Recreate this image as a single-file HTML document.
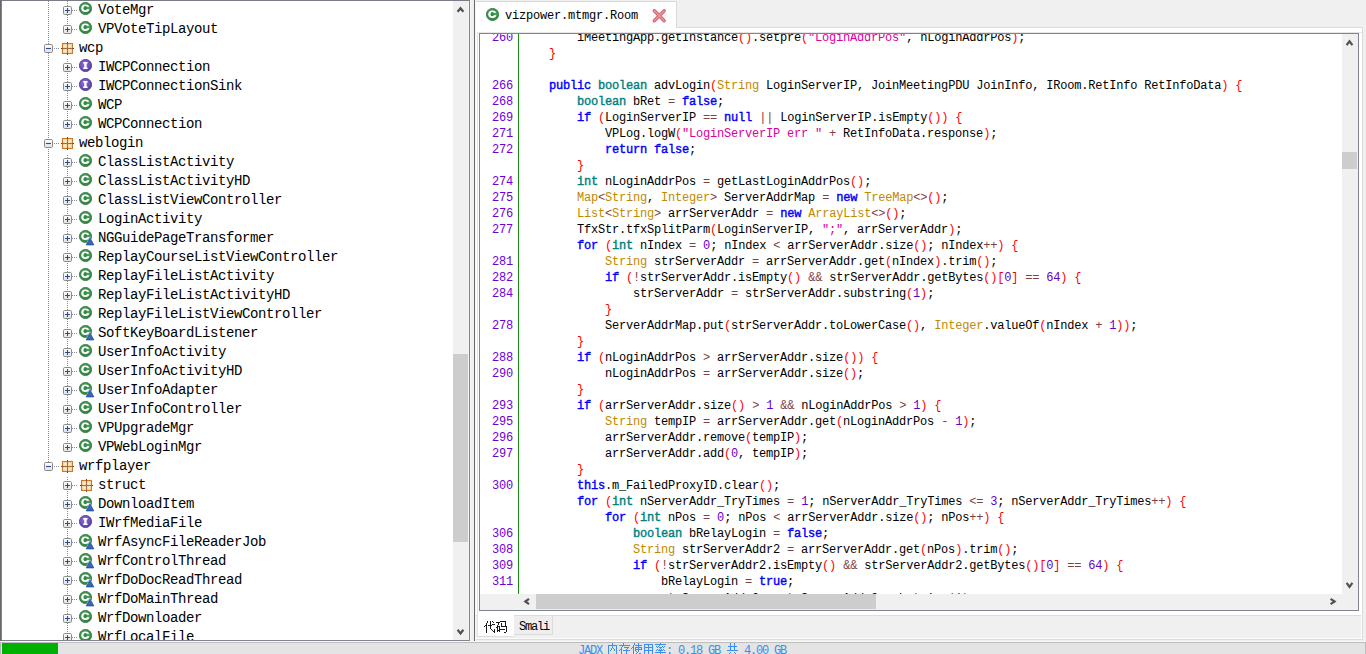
<!DOCTYPE html>
<html><head><meta charset="utf-8">
<style>
*{margin:0;padding:0;box-sizing:border-box}
html,body{width:1366px;height:654px;overflow:hidden;background:#f0f0f0;position:relative;font-family:"Liberation Sans",sans-serif}
.a{position:absolute}
/* tree */
#tree{position:absolute;left:0;top:0;width:470px;height:641px;background:#fff;border-top:1px solid #7a7d85;border-left:2px solid #7f848e;border-right:1px solid #7f848e;border-bottom:1px solid #7f848e;overflow:hidden}
#tv{position:absolute;left:-2px;top:-1px;width:453px;height:640px;overflow:hidden}
.dv{position:absolute;width:1px;background:repeating-linear-gradient(to bottom,#8a8a8a 0 1px,transparent 1px 2px)}
.dh{position:absolute;height:1px;background:repeating-linear-gradient(to right,#8a8a8a 0 1px,transparent 1px 2px)}
.ex{position:absolute;width:9px;height:9px;background:#fff}
.ex svg{display:block}
.ico{position:absolute;display:block;overflow:visible}
.tt{position:absolute;height:19px;line-height:19px;font-family:"Liberation Mono",monospace;font-size:14px;letter-spacing:-0.4px;color:#000;white-space:pre}
/* scrollbars */
.trk{position:absolute;background:#f0f0f0}
.thm{position:absolute;background:#cdcdcd}
.st{top:644px;height:14px;line-height:14px;font-family:"Liberation Mono",monospace;font-size:12px;letter-spacing:-1.2px;color:#3a8ef0;white-space:pre}
.stc{top:643px;height:14px;line-height:14px;font-size:12px;color:#3a8ef0;white-space:pre}
/* right */
.ln{position:absolute;left:480px;width:33px;height:16px;line-height:16px;text-align:right;font-family:"Liberation Mono",monospace;font-size:12px;letter-spacing:-0.2px;color:#6e00d6;white-space:pre}
.cl{position:absolute;height:16px;line-height:16px;font-family:"Liberation Mono",monospace;font-size:12px;letter-spacing:-0.2px;color:#000;white-space:pre}
.cl i,.cl b{font-style:normal}
.cl b{font-weight:normal;-webkit-text-stroke:0.4px currentColor}
.k{color:#0000ff}
.d{color:#008080}
.c{color:#c08a00}
.s{color:#dc009c}
.n{color:#6400c8}
.p{color:#ff0000}
.o{color:#804040}
</style></head><body>
<svg width="0" height="0" style="position:absolute">
<defs>
<linearGradient id="gex" x1="0" y1="0" x2="0" y2="1"><stop offset="0" stop-color="#ffffff"/><stop offset="1" stop-color="#e2e2e2"/></linearGradient>
<radialGradient id="gcl" cx="0.45" cy="0.4" r="0.65"><stop offset="0" stop-color="#5aa866"/><stop offset="1" stop-color="#2c7e3e"/></radialGradient>
<radialGradient id="gpk" cx="0.5" cy="0.5" r="0.7"><stop offset="0" stop-color="#fff6cc"/><stop offset="1" stop-color="#e8c290"/></radialGradient>
<radialGradient id="gif" cx="0.4" cy="0.35" r="0.7"><stop offset="0" stop-color="#8a70d0"/><stop offset="1" stop-color="#5a3ea0"/></radialGradient>
<symbol id="exp" viewBox="0 0 9 9"><rect x="0.5" y="0.5" width="8" height="8" rx="1.2" fill="url(#gex)" stroke="#8a8a8a"/><path d="M2 4.5H7M4.5 2V7" stroke="#2a4c9e" stroke-width="1.1"/></symbol>
<symbol id="exm" viewBox="0 0 9 9"><rect x="0.5" y="0.5" width="8" height="8" rx="1.2" fill="url(#gex)" stroke="#8a8a8a"/><path d="M2 4.5H7" stroke="#2a4c9e" stroke-width="1.1"/></symbol>
<symbol id="icl" viewBox="0 0 13 13"><circle cx="6.5" cy="6.5" r="6.1" fill="url(#gcl)" stroke="#2e7c3e" stroke-width="0.9"/><ellipse cx="6.4" cy="6.3" rx="4.1" ry="3.8" fill="#fff"/><rect x="6.4" y="4.8" width="5" height="2.4" fill="#4c9c5c"/><ellipse cx="6.2" cy="6.2" rx="1.7" ry="2.1" fill="#358848"/></symbol>
<symbol id="iif" viewBox="0 0 13 13"><circle cx="6.5" cy="6.5" r="6.1" fill="url(#gif)" stroke="#503494" stroke-width="0.9"/><path d="M4.2 3H8.6V4.5H7.6V8.6H8.6V10H4.2V8.6H5.2V4.5H4.2Z" fill="#fff"/></symbol>
<symbol id="ipk" viewBox="0 0 13 13"><rect x="1.5" y="1.5" width="10" height="10" fill="#e9c48e" stroke="#c97a2a" stroke-width="1.1"/><rect x="2" y="2" width="4.5" height="4.5" fill="url(#gpk)"/><rect x="6.5" y="2" width="4.5" height="4.5" fill="url(#gpk)"/><rect x="2" y="6.5" width="4.5" height="4.5" fill="url(#gpk)"/><rect x="6.5" y="6.5" width="4.5" height="4.5" fill="url(#gpk)"/><path d="M6.5 1V12M1 6.5H12" stroke="#a86a48" stroke-width="1"/><path d="M6.5 0V1.5M6.5 11.5V13M0 6.5H1.5M11.5 6.5H13" stroke="#6e4220" stroke-width="1"/></symbol>
<symbol id="iwr" viewBox="0 0 10 9"><path d="M5 -0.4L9.9 8.5H0.1Z" fill="#fff"/><path d="M5 0.9L8.8 7.9H1.2Z" fill="#3566b8" stroke="#1d4c9c" stroke-width="0.8"/></symbol>
</defs></svg>

<!-- ============ LEFT TREE ============ -->
<div id="tree">
 <div id="tv">
<div class="dv" style="left:48px;top:1px;height:461px"></div>
<div class="dv" style="left:67px;top:1px;height:24px"></div>
<div class="dv" style="left:67px;top:59px;height:61px"></div>
<div class="dv" style="left:67px;top:155px;height:288px"></div>
<div class="dv" style="left:67px;top:477px;height:163px"></div>
<div class="dh" style="left:72px;top:10px;width:6px"></div>
<svg class="ico" style="left:63px;top:6px" width="9" height="9"><use href="#exp"/></svg>
<svg class="ico" style="left:79px;top:2px" width="13" height="13"><use href="#icl"/></svg>
<div class="tt" style="left:98px;top:1px">VoteMgr</div>
<div class="dh" style="left:72px;top:29px;width:6px"></div>
<svg class="ico" style="left:63px;top:25px" width="9" height="9"><use href="#exp"/></svg>
<svg class="ico" style="left:79px;top:21px" width="13" height="13"><use href="#icl"/></svg>
<div class="tt" style="left:98px;top:20px">VPVoteTipLayout</div>
<div class="dh" style="left:54px;top:48px;width:5px"></div>
<svg class="ico" style="left:44px;top:44px" width="9" height="9"><use href="#exm"/></svg>
<svg class="ico" style="left:61px;top:42px" width="13" height="13"><use href="#ipk"/></svg>
<div class="tt" style="left:79px;top:39px">wcp</div>
<div class="dh" style="left:72px;top:67px;width:6px"></div>
<svg class="ico" style="left:63px;top:63px" width="9" height="9"><use href="#exp"/></svg>
<svg class="ico" style="left:79px;top:59px" width="13" height="13"><use href="#iif"/></svg>
<div class="tt" style="left:98px;top:58px">IWCPConnection</div>
<div class="dh" style="left:72px;top:86px;width:6px"></div>
<svg class="ico" style="left:63px;top:82px" width="9" height="9"><use href="#exp"/></svg>
<svg class="ico" style="left:79px;top:78px" width="13" height="13"><use href="#iif"/></svg>
<div class="tt" style="left:98px;top:77px">IWCPConnectionSink</div>
<div class="dh" style="left:72px;top:105px;width:6px"></div>
<svg class="ico" style="left:63px;top:101px" width="9" height="9"><use href="#exp"/></svg>
<svg class="ico" style="left:79px;top:97px" width="13" height="13"><use href="#icl"/></svg>
<div class="tt" style="left:98px;top:96px">WCP</div>
<div class="dh" style="left:72px;top:124px;width:6px"></div>
<svg class="ico" style="left:63px;top:120px" width="9" height="9"><use href="#exp"/></svg>
<svg class="ico" style="left:79px;top:116px" width="13" height="13"><use href="#icl"/></svg>
<div class="tt" style="left:98px;top:115px">WCPConnection</div>
<div class="dh" style="left:54px;top:143px;width:5px"></div>
<svg class="ico" style="left:44px;top:139px" width="9" height="9"><use href="#exm"/></svg>
<svg class="ico" style="left:61px;top:137px" width="13" height="13"><use href="#ipk"/></svg>
<div class="tt" style="left:79px;top:134px">weblogin</div>
<div class="dh" style="left:72px;top:162px;width:6px"></div>
<svg class="ico" style="left:63px;top:158px" width="9" height="9"><use href="#exp"/></svg>
<svg class="ico" style="left:79px;top:154px" width="13" height="13"><use href="#icl"/></svg>
<div class="tt" style="left:98px;top:153px">ClassListActivity</div>
<div class="dh" style="left:72px;top:181px;width:6px"></div>
<svg class="ico" style="left:63px;top:177px" width="9" height="9"><use href="#exp"/></svg>
<svg class="ico" style="left:79px;top:173px" width="13" height="13"><use href="#icl"/></svg>
<div class="tt" style="left:98px;top:172px">ClassListActivityHD</div>
<div class="dh" style="left:72px;top:200px;width:6px"></div>
<svg class="ico" style="left:63px;top:196px" width="9" height="9"><use href="#exp"/></svg>
<svg class="ico" style="left:79px;top:192px" width="13" height="13"><use href="#icl"/></svg>
<div class="tt" style="left:98px;top:191px">ClassListViewController</div>
<div class="dh" style="left:72px;top:219px;width:6px"></div>
<svg class="ico" style="left:63px;top:215px" width="9" height="9"><use href="#exp"/></svg>
<svg class="ico" style="left:79px;top:211px" width="13" height="13"><use href="#icl"/></svg>
<div class="tt" style="left:98px;top:210px">LoginActivity</div>
<div class="dh" style="left:72px;top:238px;width:6px"></div>
<svg class="ico" style="left:63px;top:234px" width="9" height="9"><use href="#exp"/></svg>
<svg class="ico" style="left:79px;top:230px" width="13" height="13"><use href="#icl"/></svg>
<svg class="ico" style="left:85px;top:237px" width="10" height="9"><use href="#iwr"/></svg>
<div class="tt" style="left:98px;top:229px">NGGuidePageTransformer</div>
<div class="dh" style="left:72px;top:257px;width:6px"></div>
<svg class="ico" style="left:63px;top:253px" width="9" height="9"><use href="#exp"/></svg>
<svg class="ico" style="left:79px;top:249px" width="13" height="13"><use href="#icl"/></svg>
<div class="tt" style="left:98px;top:248px">ReplayCourseListViewController</div>
<div class="dh" style="left:72px;top:276px;width:6px"></div>
<svg class="ico" style="left:63px;top:272px" width="9" height="9"><use href="#exp"/></svg>
<svg class="ico" style="left:79px;top:268px" width="13" height="13"><use href="#icl"/></svg>
<div class="tt" style="left:98px;top:267px">ReplayFileListActivity</div>
<div class="dh" style="left:72px;top:295px;width:6px"></div>
<svg class="ico" style="left:63px;top:291px" width="9" height="9"><use href="#exp"/></svg>
<svg class="ico" style="left:79px;top:287px" width="13" height="13"><use href="#icl"/></svg>
<div class="tt" style="left:98px;top:286px">ReplayFileListActivityHD</div>
<div class="dh" style="left:72px;top:314px;width:6px"></div>
<svg class="ico" style="left:63px;top:310px" width="9" height="9"><use href="#exp"/></svg>
<svg class="ico" style="left:79px;top:306px" width="13" height="13"><use href="#icl"/></svg>
<div class="tt" style="left:98px;top:305px">ReplayFileListViewController</div>
<div class="dh" style="left:72px;top:333px;width:6px"></div>
<svg class="ico" style="left:63px;top:329px" width="9" height="9"><use href="#exp"/></svg>
<svg class="ico" style="left:79px;top:325px" width="13" height="13"><use href="#icl"/></svg>
<svg class="ico" style="left:85px;top:332px" width="10" height="9"><use href="#iwr"/></svg>
<div class="tt" style="left:98px;top:324px">SoftKeyBoardListener</div>
<div class="dh" style="left:72px;top:352px;width:6px"></div>
<svg class="ico" style="left:63px;top:348px" width="9" height="9"><use href="#exp"/></svg>
<svg class="ico" style="left:79px;top:344px" width="13" height="13"><use href="#icl"/></svg>
<div class="tt" style="left:98px;top:343px">UserInfoActivity</div>
<div class="dh" style="left:72px;top:371px;width:6px"></div>
<svg class="ico" style="left:63px;top:367px" width="9" height="9"><use href="#exp"/></svg>
<svg class="ico" style="left:79px;top:363px" width="13" height="13"><use href="#icl"/></svg>
<div class="tt" style="left:98px;top:362px">UserInfoActivityHD</div>
<div class="dh" style="left:72px;top:390px;width:6px"></div>
<svg class="ico" style="left:63px;top:386px" width="9" height="9"><use href="#exp"/></svg>
<svg class="ico" style="left:79px;top:382px" width="13" height="13"><use href="#icl"/></svg>
<svg class="ico" style="left:85px;top:389px" width="10" height="9"><use href="#iwr"/></svg>
<div class="tt" style="left:98px;top:381px">UserInfoAdapter</div>
<div class="dh" style="left:72px;top:409px;width:6px"></div>
<svg class="ico" style="left:63px;top:405px" width="9" height="9"><use href="#exp"/></svg>
<svg class="ico" style="left:79px;top:401px" width="13" height="13"><use href="#icl"/></svg>
<div class="tt" style="left:98px;top:400px">UserInfoController</div>
<div class="dh" style="left:72px;top:428px;width:6px"></div>
<svg class="ico" style="left:63px;top:424px" width="9" height="9"><use href="#exp"/></svg>
<svg class="ico" style="left:79px;top:420px" width="13" height="13"><use href="#icl"/></svg>
<div class="tt" style="left:98px;top:419px">VPUpgradeMgr</div>
<div class="dh" style="left:72px;top:447px;width:6px"></div>
<svg class="ico" style="left:63px;top:443px" width="9" height="9"><use href="#exp"/></svg>
<svg class="ico" style="left:79px;top:439px" width="13" height="13"><use href="#icl"/></svg>
<div class="tt" style="left:98px;top:438px">VPWebLoginMgr</div>
<div class="dh" style="left:54px;top:466px;width:5px"></div>
<svg class="ico" style="left:44px;top:462px" width="9" height="9"><use href="#exm"/></svg>
<svg class="ico" style="left:61px;top:460px" width="13" height="13"><use href="#ipk"/></svg>
<div class="tt" style="left:79px;top:457px">wrfplayer</div>
<div class="dh" style="left:72px;top:485px;width:6px"></div>
<svg class="ico" style="left:63px;top:481px" width="9" height="9"><use href="#exp"/></svg>
<svg class="ico" style="left:80px;top:479px" width="13" height="13"><use href="#ipk"/></svg>
<div class="tt" style="left:98px;top:476px">struct</div>
<div class="dh" style="left:72px;top:504px;width:6px"></div>
<svg class="ico" style="left:63px;top:500px" width="9" height="9"><use href="#exp"/></svg>
<svg class="ico" style="left:79px;top:496px" width="13" height="13"><use href="#icl"/></svg>
<svg class="ico" style="left:85px;top:503px" width="10" height="9"><use href="#iwr"/></svg>
<div class="tt" style="left:98px;top:495px">DownloadItem</div>
<div class="dh" style="left:72px;top:523px;width:6px"></div>
<svg class="ico" style="left:63px;top:519px" width="9" height="9"><use href="#exp"/></svg>
<svg class="ico" style="left:79px;top:515px" width="13" height="13"><use href="#iif"/></svg>
<div class="tt" style="left:98px;top:514px">IWrfMediaFile</div>
<div class="dh" style="left:72px;top:542px;width:6px"></div>
<svg class="ico" style="left:63px;top:538px" width="9" height="9"><use href="#exp"/></svg>
<svg class="ico" style="left:79px;top:534px" width="13" height="13"><use href="#icl"/></svg>
<svg class="ico" style="left:85px;top:541px" width="10" height="9"><use href="#iwr"/></svg>
<div class="tt" style="left:98px;top:533px">WrfAsyncFileReaderJob</div>
<div class="dh" style="left:72px;top:561px;width:6px"></div>
<svg class="ico" style="left:63px;top:557px" width="9" height="9"><use href="#exp"/></svg>
<svg class="ico" style="left:79px;top:553px" width="13" height="13"><use href="#icl"/></svg>
<svg class="ico" style="left:85px;top:560px" width="10" height="9"><use href="#iwr"/></svg>
<div class="tt" style="left:98px;top:552px">WrfControlThread</div>
<div class="dh" style="left:72px;top:580px;width:6px"></div>
<svg class="ico" style="left:63px;top:576px" width="9" height="9"><use href="#exp"/></svg>
<svg class="ico" style="left:79px;top:572px" width="13" height="13"><use href="#icl"/></svg>
<svg class="ico" style="left:85px;top:579px" width="10" height="9"><use href="#iwr"/></svg>
<div class="tt" style="left:98px;top:571px">WrfDoDocReadThread</div>
<div class="dh" style="left:72px;top:599px;width:6px"></div>
<svg class="ico" style="left:63px;top:595px" width="9" height="9"><use href="#exp"/></svg>
<svg class="ico" style="left:79px;top:591px" width="13" height="13"><use href="#icl"/></svg>
<svg class="ico" style="left:85px;top:598px" width="10" height="9"><use href="#iwr"/></svg>
<div class="tt" style="left:98px;top:590px">WrfDoMainThread</div>
<div class="dh" style="left:72px;top:618px;width:6px"></div>
<svg class="ico" style="left:63px;top:614px" width="9" height="9"><use href="#exp"/></svg>
<svg class="ico" style="left:79px;top:610px" width="13" height="13"><use href="#icl"/></svg>
<div class="tt" style="left:98px;top:609px">WrfDownloader</div>
<div class="dh" style="left:72px;top:637px;width:6px"></div>
<svg class="ico" style="left:63px;top:633px" width="9" height="9"><use href="#exp"/></svg>
<svg class="ico" style="left:79px;top:629px" width="13" height="13"><use href="#icl"/></svg>
<div class="tt" style="left:98px;top:628px">WrfLocalFile</div>
 </div>
 <div class="trk" style="left:451px;top:0;width:16px;height:639px"></div>
 <div class="a" style="left:466px;top:0;width:1px;height:639px;background:#f6f6f6"></div>
 <div class="thm" style="left:451px;top:353px;width:15px;height:188px"></div>
</div>
<div class="a" style="left:0;top:0;width:1px;height:641px;background:#686868"></div>
<div class="a" style="left:470px;top:0;width:1px;height:641px;background:#f8f8f8"></div>
<div class="a" style="left:474px;top:0;width:1px;height:641px;background:#6a6a6a"></div>

<!-- ============ RIGHT TAB PANE ============ -->
<div class="a" style="left:475px;top:0;width:1px;height:640px;background:#f7f7f7"></div>
<div class="a" style="left:476px;top:27px;width:887px;height:1px;background:#dcdcdc"></div>
<!-- content area -->
<div class="a" style="left:476px;top:28px;width:886px;height:587px;background:#fff"></div>
<div class="a" style="left:1362px;top:27px;width:1px;height:589px;background:#dcdcdc"></div>
<div class="a" style="left:476px;top:615px;width:887px;height:1px;background:#dcdcdc"></div>
<!-- top tab -->
<div class="a" style="left:476px;top:1px;width:201px;height:27px;background:#fff;border-top:1px solid #d9d9d9;border-right:1px solid #d9d9d9"></div>
<svg class="ico" style="left:486px;top:8px" width="13" height="13"><use href="#icl"/></svg>
<div class="a" style="left:505px;top:8px;height:16px;line-height:16px;font-family:'Liberation Mono',monospace;font-size:12px;letter-spacing:-0.2px;color:#000;white-space:pre">vizpower.mtmgr.Room</div>
<!-- code frame -->
<div class="a" style="left:477px;top:32px;width:885px;height:1px;background:#e6e6e6"></div>
<div class="a" style="left:477px;top:32px;width:1px;height:604px;background:#e3e3e3"></div>
<div class="a" style="left:479px;top:33px;width:880px;height:578px;border:1px solid #7f848e;background:#fff"></div>
<div class="a" style="left:480px;top:34px;width:878px;height:576px;overflow:hidden">
 <div class="a" style="left:-480px;top:-34px;width:1366px;height:654px">
 <div class="a" style="left:518px;top:34px;width:1px;height:560px;background:#1a8a1a"></div>
<div class="ln" style="top:30px">260</div>
<div class="cl" style="top:30px;left:577px">iMeetingApp.getInstance<i class="p">(</i><i class="p">)</i>.setpre<i class="p">(</i><i class="s">&quot;LoginAddrPos&quot;</i>, nLoginAddrPos<i class="p">)</i>;</div>
<div class="cl" style="top:46px;left:549px"><i class="p">}</i></div>
<div class="ln" style="top:78px">266</div>
<div class="cl" style="top:78px;left:549px"><b class="k">public</b> <b class="d">boolean</b> advLogin<i class="p">(</i><i class="c">String</i> LoginServerIP, JoinMeetingPDU JoinInfo, IRoom.RetInfo RetInfoData<i class="p">)</i> <i class="p">{</i></div>
<div class="ln" style="top:94px">268</div>
<div class="cl" style="top:94px;left:577px"><b class="d">boolean</b> bRet <i class="o">=</i> <b class="k">false</b>;</div>
<div class="ln" style="top:110px">269</div>
<div class="cl" style="top:110px;left:577px"><b class="k">if</b> <i class="p">(</i>LoginServerIP <i class="o">==</i> <b class="k">null</b> <i class="o">||</i> LoginServerIP.isEmpty<i class="p">(</i><i class="p">)</i><i class="p">)</i> <i class="p">{</i></div>
<div class="ln" style="top:126px">271</div>
<div class="cl" style="top:126px;left:605px">VPLog.logW<i class="p">(</i><i class="s">&quot;LoginServerIP err &quot;</i> <i class="o">+</i> RetInfoData.response<i class="p">)</i>;</div>
<div class="ln" style="top:142px">272</div>
<div class="cl" style="top:142px;left:605px"><b class="k">return</b> <b class="k">false</b>;</div>
<div class="cl" style="top:158px;left:577px"><i class="p">}</i></div>
<div class="ln" style="top:174px">274</div>
<div class="cl" style="top:174px;left:577px"><b class="d">int</b> nLoginAddrPos <i class="o">=</i> getLastLoginAddrPos<i class="p">(</i><i class="p">)</i>;</div>
<div class="ln" style="top:190px">275</div>
<div class="cl" style="top:190px;left:577px"><i class="c">Map</i><i class="o">&lt;</i><i class="c">String</i>, <i class="c">Integer</i><i class="o">&gt;</i> ServerAddrMap <i class="o">=</i> <b class="k">new</b> <i class="c">TreeMap</i><i class="o">&lt;</i><i class="o">&gt;</i><i class="p">(</i><i class="p">)</i>;</div>
<div class="ln" style="top:206px">276</div>
<div class="cl" style="top:206px;left:577px"><i class="c">List</i><i class="o">&lt;</i><i class="c">String</i><i class="o">&gt;</i> arrServerAddr <i class="o">=</i> <b class="k">new</b> <i class="c">ArrayList</i><i class="o">&lt;</i><i class="o">&gt;</i><i class="p">(</i><i class="p">)</i>;</div>
<div class="ln" style="top:222px">277</div>
<div class="cl" style="top:222px;left:577px">TfxStr.tfxSplitParm<i class="p">(</i>LoginServerIP, <i class="s">&quot;;&quot;</i>, arrServerAddr<i class="p">)</i>;</div>
<div class="cl" style="top:238px;left:577px"><b class="k">for</b> <i class="p">(</i><b class="d">int</b> nIndex <i class="o">=</i> <i class="n">0</i>; nIndex <i class="o">&lt;</i> arrServerAddr.size<i class="p">(</i><i class="p">)</i>; nIndex<i class="o">++</i><i class="p">)</i> <i class="p">{</i></div>
<div class="ln" style="top:254px">281</div>
<div class="cl" style="top:254px;left:605px"><i class="c">String</i> strServerAddr <i class="o">=</i> arrServerAddr.get<i class="p">(</i>nIndex<i class="p">)</i>.trim<i class="p">(</i><i class="p">)</i>;</div>
<div class="ln" style="top:270px">282</div>
<div class="cl" style="top:270px;left:605px"><b class="k">if</b> <i class="p">(</i><i class="o">!</i>strServerAddr.isEmpty<i class="p">(</i><i class="p">)</i> <i class="o">&amp;&amp;</i> strServerAddr.getBytes<i class="p">(</i><i class="p">)</i><i class="p">[</i><i class="n">0</i><i class="p">]</i> <i class="o">==</i> <i class="n">64</i><i class="p">)</i> <i class="p">{</i></div>
<div class="ln" style="top:286px">284</div>
<div class="cl" style="top:286px;left:633px">strServerAddr <i class="o">=</i> strServerAddr.substring<i class="p">(</i><i class="n">1</i><i class="p">)</i>;</div>
<div class="cl" style="top:302px;left:605px"><i class="p">}</i></div>
<div class="ln" style="top:318px">278</div>
<div class="cl" style="top:318px;left:605px">ServerAddrMap.put<i class="p">(</i>strServerAddr.toLowerCase<i class="p">(</i><i class="p">)</i>, <i class="c">Integer</i>.valueOf<i class="p">(</i>nIndex <i class="o">+</i> <i class="n">1</i><i class="p">)</i><i class="p">)</i>;</div>
<div class="cl" style="top:334px;left:577px"><i class="p">}</i></div>
<div class="ln" style="top:350px">288</div>
<div class="cl" style="top:350px;left:577px"><b class="k">if</b> <i class="p">(</i>nLoginAddrPos <i class="o">&gt;</i> arrServerAddr.size<i class="p">(</i><i class="p">)</i><i class="p">)</i> <i class="p">{</i></div>
<div class="ln" style="top:366px">290</div>
<div class="cl" style="top:366px;left:605px">nLoginAddrPos <i class="o">=</i> arrServerAddr.size<i class="p">(</i><i class="p">)</i>;</div>
<div class="cl" style="top:382px;left:577px"><i class="p">}</i></div>
<div class="ln" style="top:398px">293</div>
<div class="cl" style="top:398px;left:577px"><b class="k">if</b> <i class="p">(</i>arrServerAddr.size<i class="p">(</i><i class="p">)</i> <i class="o">&gt;</i> <i class="n">1</i> <i class="o">&amp;&amp;</i> nLoginAddrPos <i class="o">&gt;</i> <i class="n">1</i><i class="p">)</i> <i class="p">{</i></div>
<div class="ln" style="top:414px">295</div>
<div class="cl" style="top:414px;left:605px"><i class="c">String</i> tempIP <i class="o">=</i> arrServerAddr.get<i class="p">(</i>nLoginAddrPos <i class="o">-</i> <i class="n">1</i><i class="p">)</i>;</div>
<div class="ln" style="top:430px">296</div>
<div class="cl" style="top:430px;left:605px">arrServerAddr.remove<i class="p">(</i>tempIP<i class="p">)</i>;</div>
<div class="ln" style="top:446px">297</div>
<div class="cl" style="top:446px;left:605px">arrServerAddr.add<i class="p">(</i><i class="n">0</i>, tempIP<i class="p">)</i>;</div>
<div class="cl" style="top:462px;left:577px"><i class="p">}</i></div>
<div class="ln" style="top:478px">300</div>
<div class="cl" style="top:478px;left:577px"><b class="k">this</b>.m_FailedProxyID.clear<i class="p">(</i><i class="p">)</i>;</div>
<div class="cl" style="top:494px;left:577px"><b class="k">for</b> <i class="p">(</i><b class="d">int</b> nServerAddr_TryTimes <i class="o">=</i> <i class="n">1</i>; nServerAddr_TryTimes <i class="o">&lt;=</i> <i class="n">3</i>; nServerAddr_TryTimes<i class="o">++</i><i class="p">)</i> <i class="p">{</i></div>
<div class="cl" style="top:510px;left:605px"><b class="k">for</b> <i class="p">(</i><b class="d">int</b> nPos <i class="o">=</i> <i class="n">0</i>; nPos <i class="o">&lt;</i> arrServerAddr.size<i class="p">(</i><i class="p">)</i>; nPos<i class="o">++</i><i class="p">)</i> <i class="p">{</i></div>
<div class="ln" style="top:526px">306</div>
<div class="cl" style="top:526px;left:633px"><b class="d">boolean</b> bRelayLogin <i class="o">=</i> <b class="k">false</b>;</div>
<div class="ln" style="top:542px">308</div>
<div class="cl" style="top:542px;left:633px"><i class="c">String</i> strServerAddr2 <i class="o">=</i> arrServerAddr.get<i class="p">(</i>nPos<i class="p">)</i>.trim<i class="p">(</i><i class="p">)</i>;</div>
<div class="ln" style="top:558px">309</div>
<div class="cl" style="top:558px;left:633px"><b class="k">if</b> <i class="p">(</i><i class="o">!</i>strServerAddr2.isEmpty<i class="p">(</i><i class="p">)</i> <i class="o">&amp;&amp;</i> strServerAddr2.getBytes<i class="p">(</i><i class="p">)</i><i class="p">[</i><i class="n">0</i><i class="p">]</i> <i class="o">==</i> <i class="n">64</i><i class="p">)</i> <i class="p">{</i></div>
<div class="ln" style="top:574px">311</div>
<div class="cl" style="top:574px;left:661px">bRelayLogin <i class="o">=</i> <b class="k">true</b>;</div>
<div class="cl" style="top:591px;left:661px">strServerAddr2 <i class="o">=</i> strServerAddr2.substring<i class="p">(</i><i class="n">1</i><i class="p">)</i>;</div>
 </div>
</div>
<!-- v scroll -->
<div class="trk" style="left:1342px;top:34px;width:16px;height:576px"></div>
<div class="thm" style="left:1342px;top:152px;width:15px;height:17px"></div>
<!-- h scroll -->
<div class="trk" style="left:480px;top:594px;width:878px;height:16px"></div>
<div class="thm" style="left:536px;top:594px;width:340px;height:15px"></div>

<!-- bottom tabs -->
<div class="a" style="left:477px;top:611px;width:37px;height:26px;background:#fff;border-left:1px solid #e3e3e3;border-bottom:1px solid #e0e0e0"></div>
<div class="a" style="left:514px;top:615px;width:39px;height:20px;background:#eeeeee;border:1px solid #dcdcdc;border-left:none"></div>
<div class="a" style="left:519px;top:619px;height:16px;line-height:16px;font-family:'Liberation Mono',monospace;font-size:12px;letter-spacing:-1.2px;color:#000;white-space:pre">Smali</div>
<div class="a" style="left:475px;top:638px;width:887px;height:1px;background:#fdfdfd"></div>
<div class="a" style="left:476px;top:639px;width:887px;height:1px;background:#dcdcdc"></div>
<div class="a" style="left:1361px;top:615px;width:1px;height:24px;background:#fdfdfd"></div>
<div class="a" style="left:1362px;top:27px;width:1px;height:613px;background:#dcdcdc"></div>

<!-- status bar -->
<div class="a" style="left:0;top:641px;width:1366px;height:1px;background:#f8f8f8"></div>
<div class="a" style="left:0;top:642px;width:1366px;height:1px;background:#bdbdbd"></div>
<div class="a" style="left:0;top:643px;width:1366px;height:11px;background:#e4e4e4"></div>
<div class="a" style="left:0;top:643px;width:1px;height:11px;background:#b4b4b4"></div>
<div class="a" style="left:1px;top:643px;width:1px;height:11px;background:#ece4ee"></div>
<div class="a" style="left:2px;top:643px;width:56px;height:11px;background:#00b000"></div>
<div class="a" style="left:1365px;top:642px;width:1px;height:12px;background:#bdbdbd"></div>
<div class="a st" style="left:578px">JADX </div>
<div class="a st" style="left:666px">: 0.18 GB </div>
<div class="a st" style="left:738px"> 4.00 GB</div>

<svg class="a" style="left:0;top:0;pointer-events:none" width="1366" height="654">
 <g fill="none" stroke="#505050" stroke-width="2.2">
  <path d="M457.6 11.8L460.5 8.2L463.4 11.8"/>
  <path d="M457.6 629.8L460.5 633.4L463.4 629.8"/>
  <path d="M1346.6 45.2L1349.5 41.4L1352.4 45.2"/>
  <path d="M1346.6 582.8L1349.5 586.8L1352.4 582.8"/>
  <path d="M529 598.8L525.3 601.5L529 604.2"/>
  <path d="M1330.6 598.8L1334.6 601.5L1330.6 604.2"/>
 </g>
 <g stroke-linecap="round">
  <path d="M654.3 10.8L664.2 20.7M664.2 10.8L654.3 20.7" stroke="#d4606c" stroke-width="3.4"/>
  <path d="M654.3 10.8L664.2 20.7M664.2 10.8L654.3 20.7" stroke="#e8989e" stroke-width="1.5"/>
 </g>
</svg>
<svg class="a" style="left:0;top:0;pointer-events:none" width="1366" height="654" shape-rendering="crispEdges">
 <g fill="#1a1a1a"><rect x="484" y="626" width="1" height="1"/><rect x="485" y="625" width="1" height="1"/><rect x="486" y="623" width="1" height="10"/><rect x="487" y="621" width="1" height="2"/><rect x="490" y="621" width="1" height="8"/><rect x="488" y="625" width="4" height="1"/><rect x="492" y="624" width="3" height="1"/><rect x="492" y="621" width="1" height="1"/><rect x="493" y="622" width="1" height="1"/><rect x="491" y="629" width="1" height="1"/><rect x="492" y="630" width="1" height="1"/><rect x="493" y="631" width="1" height="1"/><rect x="494" y="629" width="1" height="4"/><rect x="496" y="622" width="4" height="1"/><rect x="498" y="623" width="1" height="2"/><rect x="497" y="625" width="1" height="7"/><rect x="498" y="626" width="2" height="1"/><rect x="499" y="626" width="1" height="6"/><rect x="498" y="630" width="2" height="1"/><rect x="496" y="627" width="1" height="1"/><rect x="500" y="621" width="6" height="1"/><rect x="505" y="621" width="1" height="6"/><rect x="501" y="623" width="1" height="4"/><rect x="501" y="626" width="6" height="1"/><rect x="506" y="626" width="1" height="6"/><rect x="499" y="629" width="6" height="1"/><rect x="504" y="632" width="2" height="1"/></g>
 <g fill="#3a8ef4"><rect x="612" y="643" width="1" height="2"/><rect x="608" y="645" width="9" height="1"/><rect x="608" y="645" width="1" height="9"/><rect x="616" y="645" width="1" height="9"/><rect x="612" y="645" width="1" height="3"/><rect x="611" y="648" width="1" height="2"/><rect x="610" y="650" width="1" height="1"/><rect x="613" y="648" width="1" height="1"/><rect x="614" y="649" width="1" height="2"/><rect x="623" y="643" width="1" height="2"/><rect x="619" y="645" width="11" height="1"/><rect x="622" y="646" width="1" height="1"/><rect x="621" y="647" width="1" height="7"/><rect x="620" y="649" width="1" height="1"/><rect x="619" y="650" width="1" height="1"/><rect x="624" y="647" width="5" height="1"/><rect x="627" y="648" width="1" height="1"/><rect x="623" y="650" width="7" height="1"/><rect x="626" y="649" width="1" height="5"/><rect x="634" y="643" width="1" height="2"/><rect x="633" y="645" width="1" height="9"/><rect x="632" y="647" width="1" height="1"/><rect x="631" y="648" width="1" height="1"/><rect x="638" y="643" width="1" height="9"/><rect x="635" y="645" width="7" height="1"/><rect x="635" y="647" width="7" height="1"/><rect x="635" y="649" width="7" height="1"/><rect x="635" y="647" width="1" height="4"/><rect x="641" y="647" width="1" height="3"/><rect x="636" y="651" width="1" height="1"/><rect x="637" y="652" width="1" height="1"/><rect x="639" y="653" width="2" height="1"/><rect x="636" y="653" width="1" height="1"/><rect x="644" y="644" width="9" height="1"/><rect x="644" y="644" width="1" height="10"/><rect x="652" y="644" width="1" height="10"/><rect x="648" y="644" width="1" height="10"/><rect x="644" y="647" width="9" height="1"/><rect x="644" y="650" width="9" height="1"/><rect x="660" y="643" width="1" height="2"/><rect x="655" y="644" width="11" height="1"/><rect x="659" y="645" width="1" height="1"/><rect x="656" y="646" width="1" height="1"/><rect x="658" y="646" width="1" height="1"/><rect x="657" y="647" width="1" height="1"/><rect x="659" y="647" width="3" height="1"/><rect x="662" y="646" width="1" height="1"/><rect x="664" y="646" width="1" height="1"/><rect x="663" y="647" width="1" height="1"/><rect x="660" y="648" width="1" height="1"/><rect x="657" y="649" width="1" height="1"/><rect x="659" y="649" width="1" height="1"/><rect x="661" y="649" width="1" height="1"/><rect x="663" y="649" width="1" height="1"/><rect x="656" y="650" width="1" height="1"/><rect x="658" y="650" width="5" height="1"/><rect x="664" y="650" width="1" height="1"/><rect x="655" y="652" width="11" height="1"/><rect x="660" y="651" width="1" height="3"/><rect x="730" y="643" width="1" height="8"/><rect x="734" y="643" width="1" height="8"/><rect x="728" y="646" width="9" height="1"/><rect x="727" y="650" width="11" height="1"/><rect x="730" y="652" width="1" height="1"/><rect x="729" y="653" width="1" height="1"/><rect x="734" y="652" width="1" height="1"/><rect x="735" y="653" width="1" height="1"/></g>
</svg>
</body></html>
